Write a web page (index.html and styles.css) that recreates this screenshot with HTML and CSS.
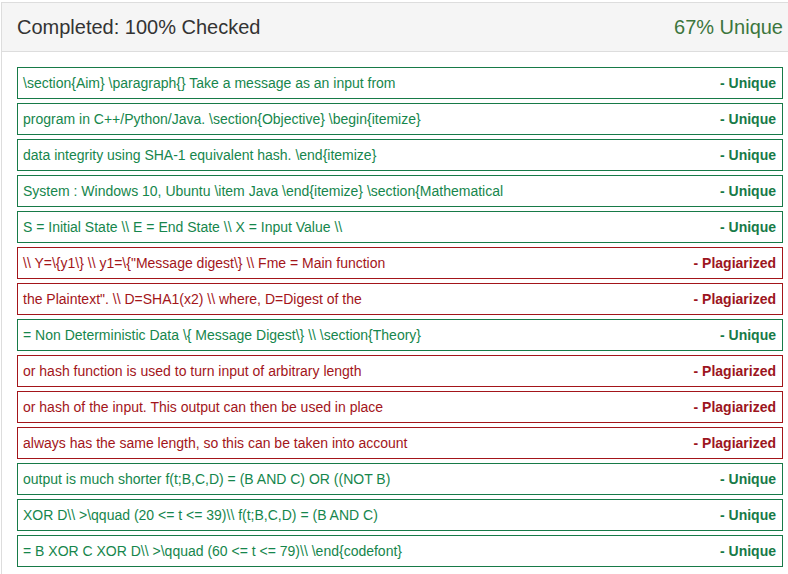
FILE: index.html
```html
<!DOCTYPE html>
<html>
<head>
<meta charset="utf-8">
<link rel="stylesheet" href="styles.css">
</head>
<body>
<div class="panel">
  <div class="panel-heading">
    <span class="title">Completed: 100% Checked</span>
    <span class="score">67% Unique</span>
  </div>
  <div class="panel-body">
    <div class="row unique"><span class="text">\section{Aim} \paragraph{} Take a message as an input from</span><span class="label">- Unique</span></div>
    <div class="row unique"><span class="text">program in C++/Python/Java. \section{Objective} \begin{itemize}</span><span class="label">- Unique</span></div>
    <div class="row unique"><span class="text">data integrity using SHA-1 equivalent hash. \end{itemize}</span><span class="label">- Unique</span></div>
    <div class="row unique"><span class="text">System : Windows 10, Ubuntu \item Java \end{itemize} \section{Mathematical</span><span class="label">- Unique</span></div>
    <div class="row unique"><span class="text">S = Initial State \\ E = End State \\ X = Input Value \\</span><span class="label">- Unique</span></div>
    <div class="row plag"><span class="text">\\ Y=\{y1\} \\ y1=\{"Message digest\} \\ Fme = Main function</span><span class="label">- Plagiarized</span></div>
    <div class="row plag"><span class="text">the Plaintext". \\ D=SHA1(x2) \\ where, D=Digest of the</span><span class="label">- Plagiarized</span></div>
    <div class="row unique"><span class="text">= Non Deterministic Data \{ Message Digest\} \\ \section{Theory}</span><span class="label">- Unique</span></div>
    <div class="row plag"><span class="text">or hash function is used to turn input of arbitrary length</span><span class="label">- Plagiarized</span></div>
    <div class="row plag"><span class="text">or hash of the input. This output can then be used in place</span><span class="label">- Plagiarized</span></div>
    <div class="row plag"><span class="text">always has the same length, so this can be taken into account</span><span class="label">- Plagiarized</span></div>
    <div class="row unique"><span class="text">output is much shorter f(t;B,C,D) = (B AND C) OR ((NOT B)</span><span class="label">- Unique</span></div>
    <div class="row unique"><span class="text">XOR D\\ &gt;\qquad (20 &lt;= t &lt;= 39)\\ f(t;B,C,D) = (B AND C)</span><span class="label">- Unique</span></div>
    <div class="row unique"><span class="text">= B XOR C XOR D\\ &gt;\qquad (60 &lt;= t &lt;= 79)\\ \end{codefont}</span><span class="label">- Unique</span></div>
  </div>
</div>
</body>
</html>
```

FILE: styles.css
```css
html, body {
  margin: 0;
  padding: 0;
  background: #fff;
  overflow: hidden;
}
body {
  font-family: "Liberation Sans", Arial, sans-serif;
  padding: 2px 0 0 1px;
}
.panel {
  width: 796px;
  border: 1px solid #ddd;
  background: #fff;
}
.panel-heading {
  background: #f5f5f5;
  border-bottom: 1px solid #ddd;
  height: 48px;
  padding: 0 15px;
  display: flex;
  align-items: center;
  justify-content: space-between;
  font-size: 20px;
}
.title { color: #333; }
.score { color: #3c763d; }
.panel-body {
  padding: 15px;
  display: flex;
  flex-direction: column;
  gap: 4px;
}
.row {
  height: 30px;
  border: 1px solid;
  display: flex;
  align-items: center;
  justify-content: space-between;
  padding: 0 6px 0 5px;
  font-size: 14px;
}
.row .label { font-weight: bold; }
.unique { border-color: #177a48; color: #16864c; }
.unique .label { color: #177a48; }
.plag { border-color: #a3151a; color: #a3151a; }
.plag .label { color: #9c1520; }
```
